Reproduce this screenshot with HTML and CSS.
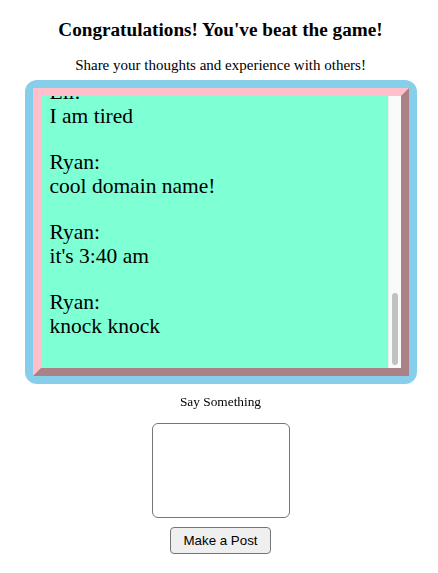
FILE: index.html
```html
<!DOCTYPE html>
<html lang="en">
<head>
    <meta charset="UTF-8">
    <meta name="viewport" content="width=device-width, initial-scale=1.0">
    <title>You Win!</title>
    <link rel="stylesheet" href="styles.css">
</head>
<body>
    <div class="page">
        <h3 class="title">Congratulations! You've beat the game!</h3>
        <p class="subtitle">Share your thoughts and experience with others!</p>

        <div class="board">
            <div class="frame">
                <div class="feed" id="feed">
                    <p class="post">Ryan:<br>first!</p>
                    <p class="post">Maya:<br>that last level was brutal</p>
                    <p class="post">Sam:<br>took me 4 tries</p>
                    <p class="post">Ryan:<br>gg everyone</p>
                    <p class="post">Maya:<br>the music slaps</p>
                    <p class="post">Eli:<br>anyone find the secret room?</p>
                    <p class="post">Sam:<br>nope</p>
                    <p class="post">Ryan:<br>hello?</p>
                    <p class="post">Maya:<br>goodnight all</p>
                    <p class="post">Eli:<br>I am tired</p>
                    <p class="post">Ryan:<br>cool domain name!</p>
                    <p class="post">Ryan:<br>it's 3:40 am</p>
                    <p class="post">Ryan:<br>knock knock</p>
                </div>
                <div class="scrollbar">
                    <div class="thumb"></div>
                </div>
            </div>
        </div>

        <form class="compose" onsubmit="return false">
            <label for="message" class="compose-label">Say Something</label>
            <textarea id="message" class="compose-box"></textarea>
            <button type="submit" class="compose-button">Make a Post</button>
        </form>
    </div>

    <script>
        // Keep the newest posts in view
        const feed = document.getElementById('feed');
        feed.scrollTop = feed.scrollHeight;
    </script>
</body>
</html>
```

FILE: styles.css
```css
body {
    margin: 8px;
    padding-left: 3px;
    background: white;
    color: black;
    font-family: "Liberation Serif", "Times New Roman", serif;
}

.page {
    display: flex;
    flex-direction: column;
    align-items: center;
    text-align: center;
}

.title {
    font-size: 19.2px;
    font-weight: bold;
    margin: 10.7px 0 0;
}

.subtitle {
    font-size: 15px;
    margin: 16px 0 6px;
}

/* Message board */
.board {
    width: 376px;
    padding: 8px;
    background: #87ceeb;
    border-radius: 12px;
}

.frame {
    display: flex;
    height: 272px;
    border: 8px outset pink;
}

.feed {
    flex: 1;
    padding: 8px 8px 8px 9px;
    overflow-y: auto;
    scrollbar-width: none;
    background: aquamarine;
    text-align: left;
}

.post {
    margin: 22px 0;
    font-size: 21.5px;
    line-height: 24px;
}

/* Drawn scrollbar, stuck at the bottom */
.scrollbar {
    display: flex;
    flex-direction: column;
    justify-content: flex-end;
    width: 13px;
    padding: 3px;
    box-sizing: border-box;
    background: #fafafa;
    border-left: 1px solid #ececec;
}

.thumb {
    height: 72px;
    background: #c1c1c1;
    border-radius: 4px;
}

/* Compose form */
.compose {
    display: flex;
    flex-direction: column;
    align-items: center;
    margin-top: 10px;
}

.compose-label {
    font-size: 13.33px;
}

.compose-box {
    box-sizing: border-box;
    width: 138px;
    height: 95px;
    margin-top: 13px;
    border: 1px solid #767676;
    border-radius: 6px;
    resize: none;
}

.compose-button {
    margin-top: 9px;
    padding: 5px 12px;
    font-family: "Liberation Sans", Arial, sans-serif;
    font-size: 13.33px;
    background: #efefef;
    border: 1px solid #767676;
    border-radius: 4px;
}
```
